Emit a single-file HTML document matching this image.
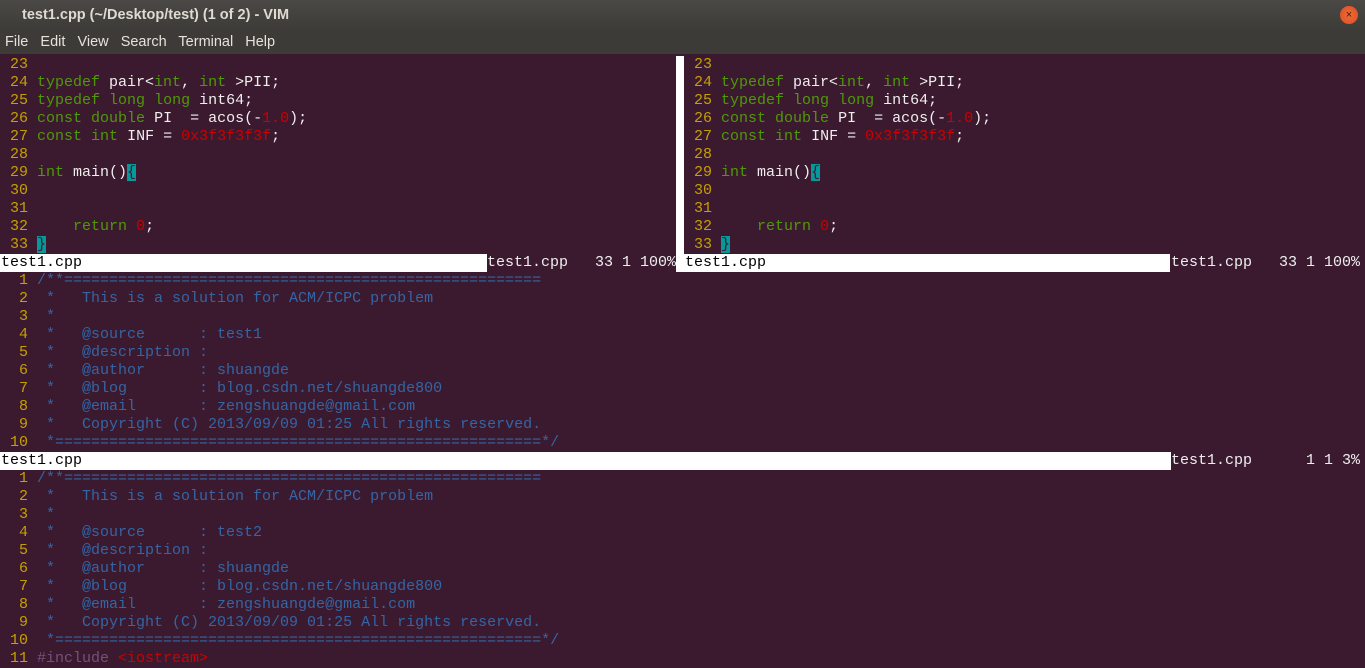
<!DOCTYPE html><html><head><meta charset="utf-8"><style>
*{margin:0;padding:0;box-sizing:border-box}
body{width:1365px;height:657px;overflow:hidden;background:#3b1a30;position:relative;font-family:"Liberation Sans","Noto Sans CJK SC",sans-serif}
#title{position:absolute;left:0;top:0;width:1365px;height:31px;background:linear-gradient(#4a4945,#3c3b37);color:#dfdbd2;font-weight:bold;font-size:14.5px;line-height:30px;padding-left:22px}
#menu{position:absolute;left:0;top:31px;width:1365px;height:23px;background:#3c3b37;color:#e6e2da;font-size:14.5px;line-height:23px;padding-left:5px;word-spacing:2px}
#close{position:absolute;left:1340px;top:6px;width:18px;height:18px;border-radius:50%;background:radial-gradient(#f26b3a,#d94e1f);color:#3a1a10;font-size:11px;text-align:center;line-height:18px}
pre{position:absolute;font-family:"Liberation Mono","DejaVu Sans Mono",monospace;font-size:15px;line-height:18px;color:#eeeeec;white-space:pre}
.n{color:#c4a000}.k{color:#4e9a06}.r{color:#cc0000}.c{color:#3465a4}.cur{background:#06989a;color:#3b1a30}.p{color:#75507b}
.w{position:absolute;background:#fff;height:18px}
.st{position:absolute;font-family:"Liberation Mono",monospace;font-size:15px;line-height:18px;color:#eee;white-space:pre}
.stb{color:#000}
.sep{position:absolute;left:676px;top:56px;width:8px;height:216px;background:#fff}
</style></head><body>
<div id="title">test1.cpp (~/Desktop/test) (1 of 2) - VIM</div>
<div id="close">×</div>
<div id="menu">File&nbsp; Edit&nbsp; View&nbsp; Search&nbsp; Terminal&nbsp; Help</div>

<pre style="left:1px;top:56px"><span class="n"> 23 </span>
<span class="n"> 24 </span><span class="k">typedef</span> pair&lt;<span class="k">int</span>, <span class="k">int</span> &gt;PII;
<span class="n"> 25 </span><span class="k">typedef</span> <span class="k">long</span> <span class="k">long</span> int64;
<span class="n"> 26 </span><span class="k">const</span> <span class="k">double</span> PI  = acos(-<span class="r">1.0</span>);
<span class="n"> 27 </span><span class="k">const</span> <span class="k">int</span> INF = <span class="r">0x3f3f3f3f</span>;
<span class="n"> 28 </span>
<span class="n"> 29 </span><span class="k">int</span> main()<span class="cur">{</span>
<span class="n"> 30 </span>
<span class="n"> 31 </span>
<span class="n"> 32 </span>    <span class="k">return</span> <span class="r">0</span>;
<span class="n"> 33 </span><span class="cur">}</span></pre>

<pre style="left:685px;top:56px"><span class="n"> 23 </span>
<span class="n"> 24 </span><span class="k">typedef</span> pair&lt;<span class="k">int</span>, <span class="k">int</span> &gt;PII;
<span class="n"> 25 </span><span class="k">typedef</span> <span class="k">long</span> <span class="k">long</span> int64;
<span class="n"> 26 </span><span class="k">const</span> <span class="k">double</span> PI  = acos(-<span class="r">1.0</span>);
<span class="n"> 27 </span><span class="k">const</span> <span class="k">int</span> INF = <span class="r">0x3f3f3f3f</span>;
<span class="n"> 28 </span>
<span class="n"> 29 </span><span class="k">int</span> main()<span class="cur">{</span>
<span class="n"> 30 </span>
<span class="n"> 31 </span>
<span class="n"> 32 </span>    <span class="k">return</span> <span class="r">0</span>;
<span class="n"> 33 </span><span class="cur">}</span></pre>

<div class="sep"></div>
<div class="w" style="left:0;top:254px;width:487px"></div>
<div class="st" style="left:1px;top:254px"><span class="stb">test1.cpp</span></div>
<div class="st" style="left:487px;top:254px">test1.cpp   33 1 100%</div>
<div class="w" style="left:684px;top:254px;width:486px"></div>
<div class="st" style="left:685px;top:254px"><span class="stb">test1.cpp</span></div>
<div class="st" style="left:1171px;top:254px">test1.cpp   33 1 100%</div>

<pre style="left:1px;top:272px"><span class="n">  1 </span><span class="c">/**=====================================================</span>
<span class="n">  2 </span><span class="c"> *   This is a solution for ACM/ICPC problem</span>
<span class="n">  3 </span><span class="c"> *</span>
<span class="n">  4 </span><span class="c"> *   @source      : test1</span>
<span class="n">  5 </span><span class="c"> *   @description :</span>
<span class="n">  6 </span><span class="c"> *   @author      : shuangde</span>
<span class="n">  7 </span><span class="c"> *   @blog        : blog.csdn.net/shuangde800</span>
<span class="n">  8 </span><span class="c"> *   @email       : zengshuangde@gmail.com</span>
<span class="n">  9 </span><span class="c"> *   Copyright (C) 2013/09/09 01:25 All rights reserved.</span>
<span class="n"> 10 </span><span class="c"> *======================================================*/</span></pre>

<div class="w" style="left:0;top:452px;width:1171px"></div>
<div class="st" style="left:1px;top:452px"><span class="stb">test1.cpp</span></div>
<div class="st" style="left:1171px;top:452px">test1.cpp      1 1 3%</div>

<pre style="left:1px;top:470px"><span class="n">  1 </span><span class="c">/**=====================================================</span>
<span class="n">  2 </span><span class="c"> *   This is a solution for ACM/ICPC problem</span>
<span class="n">  3 </span><span class="c"> *</span>
<span class="n">  4 </span><span class="c"> *   @source      : test2</span>
<span class="n">  5 </span><span class="c"> *   @description :</span>
<span class="n">  6 </span><span class="c"> *   @author      : shuangde</span>
<span class="n">  7 </span><span class="c"> *   @blog        : blog.csdn.net/shuangde800</span>
<span class="n">  8 </span><span class="c"> *   @email       : zengshuangde@gmail.com</span>
<span class="n">  9 </span><span class="c"> *   Copyright (C) 2013/09/09 01:25 All rights reserved.</span>
<span class="n"> 10 </span><span class="c"> *======================================================*/</span>
<span class="n"> 11 </span><span class="p">#include</span> <span class="r">&lt;iostream&gt;</span></pre>
</body></html>
